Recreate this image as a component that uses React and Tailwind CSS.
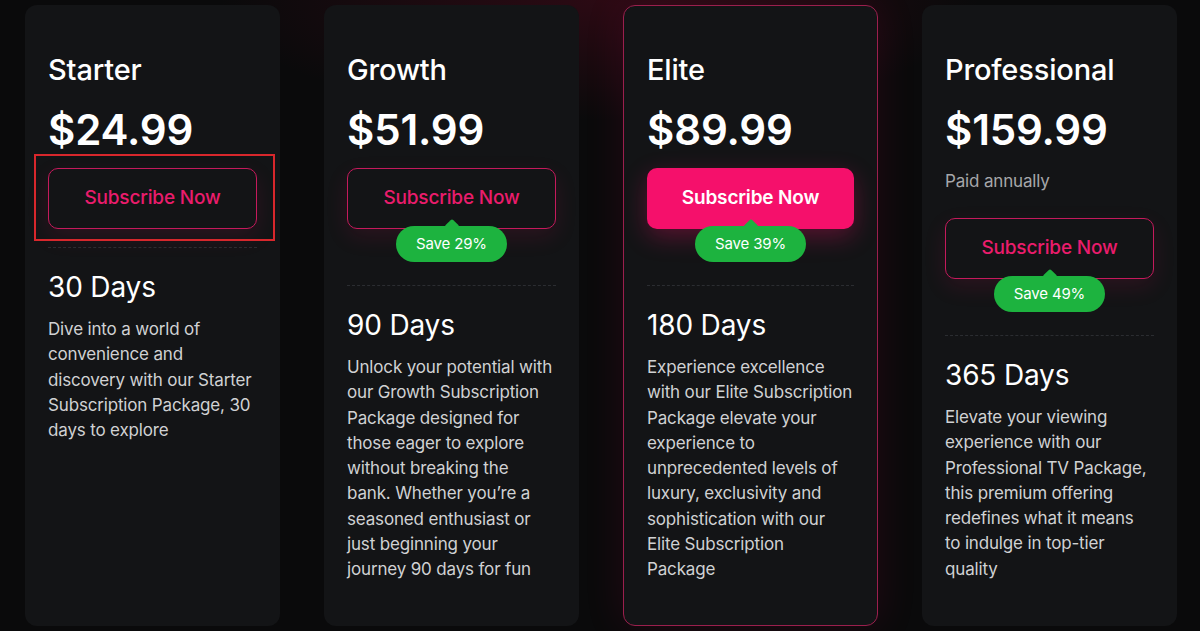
const PLANS = [
  {
    name: 'Starter',
    price: '$24.99',
    days: '30 Days',
    desc: 'Dive into a world of convenience and discovery with our Starter Subscription Package, 30 days to explore',
    marked: true,
  },
  {
    name: 'Growth',
    price: '$51.99',
    days: '90 Days',
    save: 'Save 29%',
    desc: 'Unlock your potential with our Growth Subscription Package designed for those eager to explore without breaking the bank. Whether you\u2019re a seasoned enthusiast or just beginning your journey 90 days for fun',
  },
  {
    name: 'Elite',
    price: '$89.99',
    days: '180 Days',
    save: 'Save 39%',
    featured: true,
    desc: 'Experience excellence with our Elite Subscription Package elevate your experience to unprecedented levels of luxury, exclusivity and sophistication with our Elite Subscription Package',
  },
  {
    name: 'Professional',
    price: '$159.99',
    note: 'Paid annually',
    days: '365 Days',
    save: 'Save 49%',
    desc: 'Elevate your viewing experience with our Professional TV Package, this premium offering redefines what it means to indulge in top-tier quality',
  },
]

function SaveBadge({ label }) {
  return (
    <div className="relative z-10 -mt-[3px] mb-[5px] flex justify-center">
      <div className="relative">
        <div className="absolute left-1/2 -top-[5px] h-[11px] w-[11px] -translate-x-1/2 rotate-45 rounded-[2px] bg-[#1db33f]" />
        <div className="relative flex h-[36px] w-[111px] items-center justify-center rounded-full bg-[#1db33f] text-[15px] text-white">
          {label}
        </div>
      </div>
    </div>
  )
}

function PlanCard({ plan }) {
  return (
    <div
      className={
        'flex w-[255px] shrink-0 flex-col rounded-[12px] bg-[#131416] px-[23px] ' +
        (plan.featured ? 'border border-[#9b1f4d] pt-[46px] shadow-[0_0_40px_rgba(220,20,90,0.12)]' : 'pt-[47px]')
      }
    >
      <h2 className="text-[29px] font-medium leading-[36px] text-white">{plan.name}</h2>
      <div className="mt-[17px] text-[42px] font-semibold leading-[50px] text-white">{plan.price}</div>
      {plan.note && <div className="mt-[14px] text-[17px] leading-[24px] text-[#a6a7aa]">{plan.note}</div>}

      <div className={'relative ' + (plan.note ? 'mt-[25px]' : 'mt-[13px]')}>
        {plan.marked && (
          <div className="pointer-events-none absolute -left-[14px] -right-[18px] -top-[14px] -bottom-[12px] border-2 border-[#d8272c]" />
        )}
        <button
          className={
            'flex h-[61px] w-full items-center justify-center rounded-[10px] text-[19px] ' +
            (plan.featured
              ? 'bg-[#f5106b] font-semibold text-white shadow-[0_8px_24px_rgba(245,16,107,0.3)]'
              : 'border border-[#c51a5c] font-medium text-[#ea1c6c] shadow-[0_8px_22px_rgba(220,20,90,0.12)]')
          }
        >
          Subscribe Now
        </button>
      </div>

      {plan.save && <SaveBadge label={plan.save} />}

      <div className="mt-[18px] border-t border-dashed border-[#2b2d31]" />

      <div className="mt-[22px] text-[28px] leading-[34px] text-white">{plan.days}</div>
      <p className="mt-[13px] w-[206px] text-[17px] leading-[25.3px] text-[#d0d1d3]">{plan.desc}</p>
    </div>
  )
}

export default function App() {
  return (
    <div
      className="flex h-[631px] w-[1200px] items-stretch gap-[44px] overflow-hidden bg-[#0a0a0b] bg-[radial-gradient(ellipse_380px_120px_at_600px_0px,rgba(120,10,40,0.3),transparent)] pl-[25px] py-[5px]"
      style={{ fontFamily: 'Inter, "Noto Sans", sans-serif', letterSpacing: '-0.01em' }}
    >
      {PLANS.map(p => (
        <PlanCard key={p.name} plan={p} />
      ))}
    </div>
  )
}
